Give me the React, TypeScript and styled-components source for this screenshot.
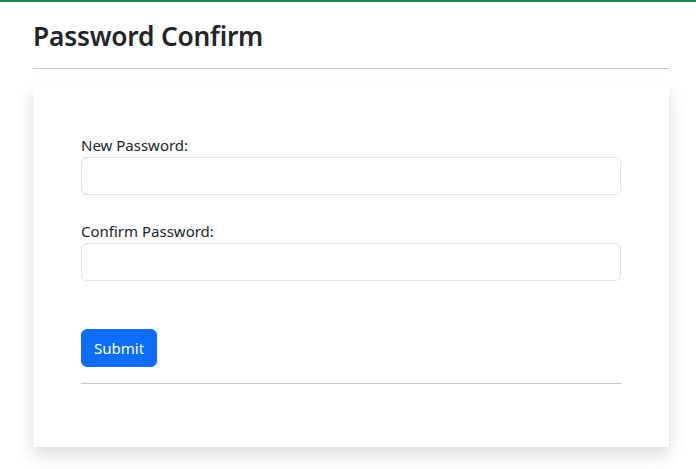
import React from 'react'
import styled, { createGlobalStyle } from 'styled-components'

const GlobalStyle = createGlobalStyle`
  body {
    margin: 0;
    background: #fff;
    color: #212529;
    font-family: "Noto Sans", "Open Sans", sans-serif;
  }
  * {
    box-sizing: border-box;
  }
`

export default function App(): JSX.Element {
  return (
    <>
      <GlobalStyle />
      <Page>
        <Container>
          <Title>Password Confirm</Title>
          <Rule />
          <Card>
            <Field>
              <Label htmlFor="new-password">New Password:</Label>
              <Input id="new-password" type="password" />
            </Field>
            <Field>
              <Label htmlFor="confirm-password">Confirm Password:</Label>
              <Input id="confirm-password" type="password" />
            </Field>
            <Button type="button">Submit</Button>
            <Rule $spaced />
          </Card>
        </Container>
      </Page>
    </>
  )
}

const Page = styled.div`
  border-top: 2px solid #198754;
  min-height: 100vh;
`

const Container = styled.div`
  width: 636px;
  margin-left: 33px;
`

const Title = styled.h1`
  margin: 0;
  padding-top: 16px;
  font-size: 26.3px;
  font-weight: 600;
  line-height: 36px;
  letter-spacing: -0.2px;
`

const Rule = styled.hr<{ $spaced?: boolean }>`
  margin: ${(p) => (p.$spaced ? '16px 0 15px' : '14px 0 16px')};
  border: 0;
  border-top: 1px solid #c6c6c6;
`

const Card = styled.div`
  background: #fff;
  padding: 48px 48px 48px;
  box-shadow: 0 8px 16px rgba(0, 0, 0, 0.15);
`

const Field = styled.div`
  display: flex;
  flex-direction: column;
  margin-bottom: 24px;

  & + & {
    margin-bottom: 48px;
  }
`

const Label = styled.label`
  font-size: 15px;
  line-height: 24px;
`

const Input = styled.input`
  height: 38px;
  width: 100%;
  border: 1px solid #dee2e6;
  border-radius: 6px;
  padding: 6px 12px;
  font-size: 16px;
  font-family: inherit;
  background: #fff;
`

const Button = styled.button`
  height: 38px;
  padding: 0 12px;
  border: 1px solid #0d6efd;
  border-radius: 6px;
  background: #0d6efd;
  color: #fff;
  font-size: 15px;
  font-family: inherit;
`
